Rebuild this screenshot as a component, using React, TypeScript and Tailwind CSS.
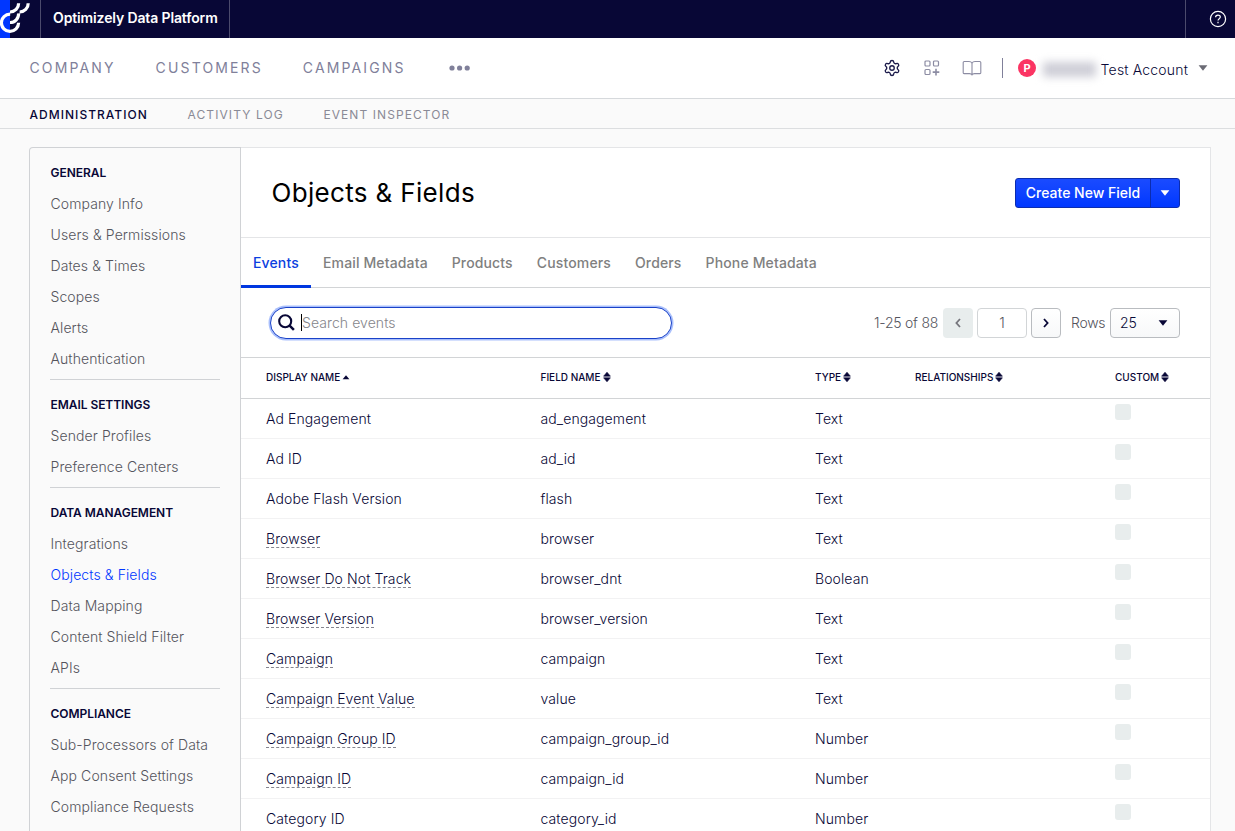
import { Settings } from "lucide-react";

const sections = [
  {
    title: "GENERAL",
    items: ["Company Info", "Users & Permissions", "Dates & Times", "Scopes", "Alerts", "Authentication"],
  },
  { title: "EMAIL SETTINGS", items: ["Sender Profiles", "Preference Centers"] },
  {
    title: "DATA MANAGEMENT",
    items: ["Integrations", "Objects & Fields", "Data Mapping", "Content Shield Filter", "APIs"],
  },
  {
    title: "COMPLIANCE",
    items: ["Sub-Processors of Data", "App Consent Settings", "Compliance Requests"],
  },
];

const tabs = ["Events", "Email Metadata", "Products", "Customers", "Orders", "Phone Metadata"];

const fields = [
  { name: "Ad Engagement", field: "ad_engagement", type: "Text" },
  { name: "Ad ID", field: "ad_id", type: "Text" },
  { name: "Adobe Flash Version", field: "flash", type: "Text" },
  { name: "Browser", field: "browser", type: "Text", hint: true },
  { name: "Browser Do Not Track", field: "browser_dnt", type: "Boolean", hint: true },
  { name: "Browser Version", field: "browser_version", type: "Text", hint: true },
  { name: "Campaign", field: "campaign", type: "Text", hint: true },
  { name: "Campaign Event Value", field: "value", type: "Text", hint: true },
  { name: "Campaign Group ID", field: "campaign_group_id", type: "Number", hint: true },
  { name: "Campaign ID", field: "campaign_id", type: "Number", hint: true },
  { name: "Category ID", field: "category_id", type: "Number" },
];

const Logo = () => (
  <svg width="32" height="38" viewBox="0 0 32 38" fill="none" stroke="#fff" strokeWidth="3.2">
    <path d="M10.2 14.2A8.6 8.6 0 1 0 18.6 22.8" />
    <path d="M10 22.5A8.6 8.6 0 0 0 18.6 13.4" />
    <path d="M10 12A8.6 8.6 0 0 0 18.6 3.2" />
    <path d="M19.6 12A8.6 8.6 0 0 0 28.2 3.2" />
  </svg>
);

const Caret = ({ className }: { className?: string }) => (
  <svg width="10" height="6" viewBox="0 0 10 6" fill="currentColor" className={className}>
    <path d="M0.6 0.3H9.4L5 5.7Z" />
  </svg>
);

const SortIcon = () => (
  <svg width="8" height="10" viewBox="0 0 8 10" fill="currentColor" className="relative -top-px ml-[2px]">
    <path d="M4 0.2L7.4 4.2H0.6ZM4 9.8L0.6 5.8H7.4Z" stroke="currentColor" strokeWidth="0.6" strokeLinejoin="round" />
  </svg>
);

const TopBar = () => (
  <header className="flex h-[38px] bg-[#080736] text-white">
    <div className="flex w-[41px] border-r border-[#4b4a6c] bg-linear-to-r from-[#0037ff] from-[10px] to-[#080736] to-[10px]">
      <Logo />
    </div>
    <div className="flex w-[189px] items-center border-r border-[#4b4a6c] pb-[3px] pl-3 text-[14px] font-semibold tracking-[-0.13px] whitespace-nowrap">
      Optimizely Data Platform
    </div>
    <div className="ml-auto flex w-[50px] items-center border-l border-[#4b4a6c] pl-[23px]">
      <svg width="18" height="18" viewBox="0 0 18 18" fill="none" stroke="#fff" strokeWidth="1.2">
        <circle cx="9" cy="9" r="7.6" />
        <path d="M6.6 7.2C6.6 4.4 11.3 4.4 11.3 7.1C11.3 8.8 9 8.6 9 10.6M9 11.8V13.2" />
      </svg>
    </div>
  </header>
);

const NavBar = () => (
  <nav className="flex h-[61px] items-center border-b border-[#d6d9dc] bg-white pr-[27px] pl-[29.5px]">
    <div className="flex items-center gap-[40px] text-[14px] tracking-[2.13px] text-[#80809a]">
      <span className="-mt-px">COMPANY</span>
      <span className="-mt-px">CUSTOMERS</span>
      <span className="-mt-px">CAMPAIGNS</span>
      <svg width="22" height="6" viewBox="0 0 22 6" fill="#80809a" className="ml-[3.5px]">
        <circle cx="3" cy="3" r="2.6" />
        <circle cx="10.6" cy="3" r="2.6" />
        <circle cx="18.2" cy="3" r="2.6" />
      </svg>
    </div>
    <div className="ml-auto flex items-center text-[#8c8ca3]">
      <Settings size={18} strokeWidth={1.8} className="text-[#1c1b4b]" />
      <svg width="16" height="16" viewBox="0 0 16 16" fill="none" stroke="currentColor" strokeWidth="1.2" className="ml-[23px]">
        <rect x="1" y="1" width="5" height="5" rx="1" />
        <rect x="9.5" y="1" width="5" height="5" rx="1" />
        <rect x="1" y="9.5" width="5" height="5" rx="1" />
        <path d="M12 8.8V15.4M8.7 12.1H15.3" strokeWidth="1.6" />
      </svg>
      <svg width="20" height="16" viewBox="0 0 20 16" fill="none" stroke="currentColor" strokeWidth="1.1" className="ml-[22px]">
        <path d="M10 3.2C9.4 2 8.2 1.5 7 1.5H2.2C1.6 1.5 1.2 1.9 1.2 2.5V12.8C1.2 13.3 1.5 13.6 2 13.6H7.6C8.8 13.6 9.6 14 10 14.8C10.4 14 11.2 13.6 12.4 13.6H18C18.5 13.6 18.8 13.3 18.8 12.8V2.5C18.8 1.9 18.4 1.5 17.8 1.5H13C11.8 1.5 10.6 2 10 3.2ZM10 3.2V14.4" />
      </svg>
      <div className="ml-5 h-5 w-px bg-[#80809a]" />
      <div className="ml-[15px] flex size-[18px] items-center justify-center rounded-full bg-[#fb3463] text-[11px] font-bold text-white">
        P
      </div>
      <div className="mt-[3px] ml-[7px] h-[15px] w-[53px] bg-[#ceced7] blur-[4px]" />
      <span className="mt-[2px] ml-[4.5px] text-[14px] font-light tracking-[0.18px] text-[#080736]">Test Account</span>
      <Caret className="ml-[10px] text-[#6b6b75]" />
    </div>
  </nav>
);

const SubNav = () => (
  <nav className="flex h-[30px] items-center gap-[39.7px] border-b border-[#dcdee0] bg-[#fafafa] pt-[2px] pl-[29.5px] text-[12px] tracking-[1.08px] text-[#8a8a96]">
    <span className="font-medium tracking-[1.03px] text-[#080736]">ADMINISTRATION</span>
    <span>ACTIVITY LOG</span>
    <span>EVENT INSPECTOR</span>
  </nav>
);

const Sidebar = () => (
  <aside className="w-[212px] shrink-0 rounded-tl-sm border border-b-0 border-[#d0d2d5] px-5 pt-[9px]">
    {sections.map((section, index) => (
      <div key={section.title} className={index > 0 ? "mt-[5px] border-t border-[#d0d2d5] pt-[9px]" : ""}>
        <h3 className="flex h-[31px] items-center pl-[0.5px] text-[12px] font-semibold tracking-[-0.05px] text-[#080736]">{section.title}</h3>
        {section.items.map((item) => (
          <div
            key={item}
            className={
              item === "Objects & Fields"
                ? "flex h-[31px] items-center pl-[0.5px] text-[14px] font-light tracking-[0.1px] whitespace-nowrap text-[#0037ff]"
                : "flex h-[31px] items-center pl-[0.5px] text-[14px] font-light tracking-[0.1px] whitespace-nowrap text-[#54545c]"
            }
          >
            {item}
          </div>
        ))}
      </div>
    ))}
  </aside>
);

const Toolbar = () => (
  <div className="flex h-[70px] items-center justify-between border-b border-[#d2d4d6] pr-[30px] pl-[29px]">
    <div className="flex h-8 w-[402px] items-center rounded-full border border-[#1a42c8] bg-white pl-[7px] shadow-[0_0_0_1.5px_#a9bffc]">
      <svg width="17" height="17" viewBox="0 0 17 17" fill="none" stroke="#080736" strokeWidth="2.1">
        <circle cx="7.2" cy="7.2" r="6" />
        <path d="M11.6 11.6L15.9 15.9" strokeWidth="2.5" />
      </svg>
      <div className="ml-[6px] h-[17px] w-px bg-black" />
      <span className="text-[14px] font-light tracking-[0.08px] text-[#85858a]">Search events</span>
    </div>
    <div className="flex items-center text-[14px] font-light text-[#54545c]">
      <span className="tracking-[-0.25px]">1-25 of 88</span>
      <button className="ml-[5px] flex h-[30px] w-[30px] items-center justify-center rounded-sm bg-[#e8eded]">
        <svg width="6" height="10" viewBox="0 0 6 10" fill="none" stroke="#75757c" strokeWidth="1.8">
          <path d="M5 1L1.4 5L5 9" />
        </svg>
      </button>
      <div className="ml-1 flex h-[30px] w-[50px] items-center justify-center rounded-sm border border-[#d2d5d7] bg-white">1</div>
      <button className="ml-1 flex h-[30px] w-[30px] items-center justify-center rounded-sm border border-[#b9bcc0] bg-linear-to-b from-white to-[#f7f8f9]">
        <svg width="6" height="10" viewBox="0 0 6 10" fill="none" stroke="#080736" strokeWidth="1.8">
          <path d="M1 1L4.6 5L1 9" />
        </svg>
      </button>
      <span className="ml-[10px] w-[34px] tracking-[-0.3px]">Rows</span>
      <button className="ml-[5px] flex h-[30px] w-[70px] items-center justify-between rounded-sm border border-[#b9bcc0] bg-linear-to-b from-white to-[#f7f8f9] pr-[11px] pl-[9px] text-[#080736]">
        <span>25</span>
        <Caret />
      </button>
    </div>
  </div>
);

const App = () => {
  return (
    <div className="flex h-[831px] w-[1235px] flex-col overflow-hidden bg-[#fafafa] font-['Inter',sans-serif] text-[#080736]">
      <TopBar />
      <NavBar />
      <SubNav />
      <div className="flex min-h-0 flex-1 pt-[18px] pr-6 pl-[29px]">
        <Sidebar />
        <main className="min-w-0 flex-1 border-t border-r border-[#e4e5e7] bg-white">
          <div className="flex h-[90px] items-center justify-between border-b border-[#e4e5e7] pr-[30px] pl-[30.5px]">
            <h1 className="text-[26px] tracking-[0.33px] text-black">Objects & Fields</h1>
            <div className="flex h-[30px] rounded-[3px] border border-[#0b2cb0] bg-linear-to-b from-[#1a4bff] to-[#0037ff] text-[14px] font-medium text-white">
              <button className="w-[135px] border-r border-[#0b2cb0]">Create New Field</button>
              <button className="flex w-[28px] items-center justify-center">
                <Caret />
              </button>
            </div>
          </div>
          <div className="flex h-[50px] border-b border-[#d2d4d6] text-[14px] font-medium tracking-[0.14px] text-[#808080]">
            {tabs.map((tab) => (
              <div
                key={tab}
                className={
                  tab === "Events"
                    ? "-mb-px flex w-[70px] items-center border-b-[3px] border-[#0037e0] px-3 pt-[2px] text-[#0b3fe0]"
                    : "flex items-center px-3"
                }
              >
                {tab}
              </div>
            ))}
          </div>
          <Toolbar />
          <table className="w-full table-fixed text-left">
            <colgroup>
              <col className="w-[299.5px]" />
              <col className="w-[274.5px]" />
              <col className="w-[100px]" />
              <col className="w-[200px]" />
              <col />
            </colgroup>
            <thead>
              <tr className="h-[40px] border-b border-[#d2d4d6] text-[10px] font-medium">
                <th className="pl-[25px] font-medium">
                  <div className="flex items-center">
                    DISPLAY NAME
                    <svg width="8" height="5" viewBox="0 0 8 5" fill="currentColor" className="ml-[2px]">
                      <path d="M4 0.2L7.4 4.2H0.6Z" />
                    </svg>
                  </div>
                </th>
                {["FIELD NAME", "TYPE", "RELATIONSHIPS", "CUSTOM"].map((label) => (
                  <th key={label} className="font-medium">
                    <div className="flex items-center">
                      {label}
                      <SortIcon />
                    </div>
                  </th>
                ))}
              </tr>
            </thead>
            <tbody>
              {fields.map((row) => (
                <tr key={row.field} className="h-10 border-b border-[#f2f2f3] text-[14px] leading-[17px] font-light tracking-[0.1px]">
                  <td className="pl-[25px]">
                    <span className={row.hint ? "border-b border-dashed border-[#85858f]" : ""}>{row.name}</span>
                  </td>
                  <td>{row.field}</td>
                  <td>{row.type}</td>
                  <td></td>
                  <td className="align-top">
                    <div className="mt-[5px] size-4 rounded-[3px] bg-[#e8eded]" />
                  </td>
                </tr>
              ))}
            </tbody>
          </table>
        </main>
      </div>
    </div>
  );
};

export default App;
